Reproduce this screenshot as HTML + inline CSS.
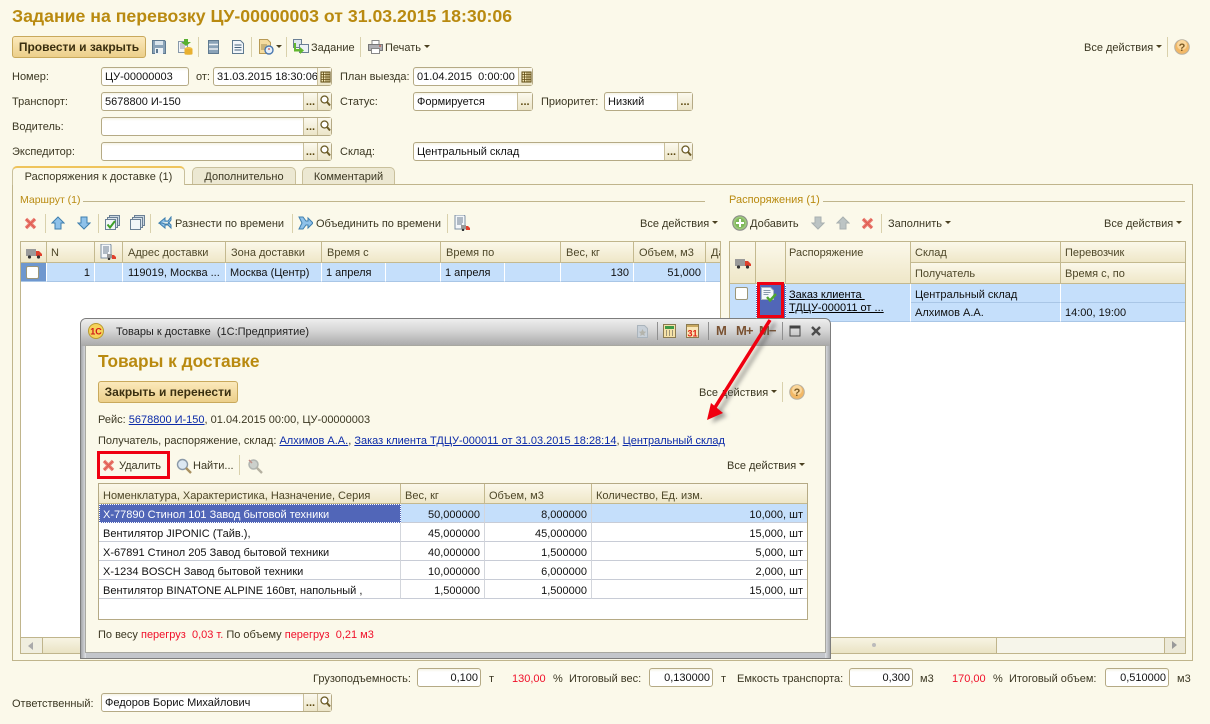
<!DOCTYPE html>
<html><head><meta charset="utf-8"><title>Задание на перевозку</title>
<style>
html,body{margin:0;padding:0}
body{width:1210px;height:724px;overflow:hidden;background:#fbf9ea;position:relative;font:11px/16px "Liberation Sans","Noto Sans CJK SC",sans-serif;color:#3b3722}
.t{position:absolute;white-space:nowrap;margin-top:1px}
.a{position:absolute}
.f{position:absolute;height:17px;border:1px solid #b5aa85;border-radius:3px;background:linear-gradient(#f5f3e6,#fff 3px);box-sizing:content-box;color:#111;line-height:14px}
.f .v{position:absolute;left:3px;top:2px;white-space:nowrap}
.f .n{position:absolute;right:2px;top:2px;white-space:nowrap}
.b{position:absolute;top:0;width:14px;height:17px;border-left:1px solid #c9bf9b;background:linear-gradient(#fbf9ee,#ece5c8);font-style:normal;text-align:center;color:#5d4a10;font-weight:bold;font-size:11px;line-height:19px;box-sizing:border-box}
.b svg{position:absolute;left:1px;top:1px}
.s{position:absolute;width:1px;background:#d9d1ac}
.dd{position:absolute;width:0;height:0;border:3px solid transparent;border-top:3px solid #4a4020;border-bottom:0}
.btn{position:absolute;border:1px solid #c9a95c;border-radius:3px;background:linear-gradient(#fbe9bb,#eccf8a);font-weight:bold;text-align:center;color:#3a2f10;font-size:12px;box-sizing:border-box}
.tab{position:absolute;top:167px;height:17px;box-sizing:border-box;border:1px solid #c9c09c;border-bottom:0;border-radius:5px 5px 0 0;background:#ece8d2;text-align:center;line-height:18px;color:#3b3722}
.h{position:absolute;box-sizing:border-box;background:linear-gradient(#fbf8ea,#efe7c8);border-right:1px solid #c4b98f;border-bottom:1px solid #c4b98f;padding:3px 0 0 5px;color:#4e4728;white-space:nowrap;overflow:hidden}
.rt .h{padding-left:4px}
.pt .h{padding:4px 0 0 4px}
.c{position:absolute;box-sizing:border-box;background:#c5dffb;border-right:1px solid #fff;border-bottom:1px solid #a9c6e6;color:#111;padding:2px 4px;white-space:nowrap;overflow:hidden}
.r{text-align:right}
.p{position:absolute;box-sizing:border-box;background:#fff;border-right:1px solid #d3d6dc;border-bottom:1px solid #c8ccd6;color:#111;white-space:nowrap;overflow:hidden;padding:3px 4px;height:19px}
.lnk{color:#0b2aa8;text-decoration:underline}
.red{color:#f0102a}
.ck{position:absolute;width:11px;height:11px;background:#fff;border:1px solid #9c9678;border-radius:2px}
.ttl{font-weight:bold;color:#b98a10}
.m{position:absolute;font:bold 13px/14px "Liberation Sans",sans-serif;color:#7a5232;white-space:nowrap;letter-spacing:-1px}
</style></head><body>
<svg width="0" height="0" style="position:absolute">
<defs>
<symbol id="q" viewBox="0 0 13 15"><circle cx="5.500" cy="5.500" r="3.500" fill="#fff" stroke="#6a5a25" stroke-width="1.300"/><path d="M8 8L11 11.500" stroke="#6a5a25" stroke-width="2"/></symbol>
<symbol id="cal" viewBox="0 0 13 15"><path d="M2 3h9v10H2z" fill="#f4e7b8" stroke="#5d4a10"/><path d="M2 5.500h9M2 8h9M2 10.500h9M4.500 3v10M7 3v10M9 3v10" stroke="#5d4a10" stroke-width=".8"/></symbol>
<symbol id="x" viewBox="0 0 13 13"><path d="M2 2L11 11M11 2L2 11" stroke="#ea8076" stroke-width="3.400"/><path d="M2 2L11 11M11 2L2 11" stroke="#e05a4e" stroke-width="1.200"/></symbol>
<symbol id="up" viewBox="0 0 14 14"><path d="M7 1L13 7H10V13H4V7H1Z" fill="#8fc2ea" stroke="#3f7fae"/></symbol>
<symbol id="dn" viewBox="0 0 14 14"><path d="M7 13L13 7H10V1H4V7H1Z" fill="#8fc2ea" stroke="#3f7fae"/></symbol>
<symbol id="truck" viewBox="0 0 16 12"><path d="M0 2h10v7H0z" fill="#9a9a9a"/><path d="M10 4h3l3 3v2h-6z" fill="#e0402c"/><circle cx="3.500" cy="10" r="1.600" fill="#333"/><circle cx="12.500" cy="10" r="1.600" fill="#333"/></symbol>
<symbol id="doct" viewBox="0 0 16 16"><path d="M1 0h9l1 1v13H1z" fill="#f4f7fa" stroke="#7d8fa2"/><path d="M3 3h6M3 5h6M3 7h6M3 9h5" stroke="#6b7d90"/><path d="M7 10h5v4H7z" fill="#999"/><path d="M12 11h2l2 2v2h-4z" fill="#e0402c"/><circle cx="9" cy="15" r="1.200" fill="#333"/></symbol>
<symbol id="help" viewBox="0 0 16 16"><circle cx="8" cy="8" r="7.300" fill="#f2b866" stroke="#b8b0a0"/><circle cx="8" cy="6" r="5" fill="#fad79c"/><text x="8" y="12" font-size="11" font-weight="bold" text-anchor="middle" fill="#7a5a25" font-family="Liberation Sans">?</text></symbol>
<symbol id="mg" viewBox="0 0 16 16"><circle cx="6.500" cy="6.500" r="5" fill="#dce8f2" stroke="#8a99a8" stroke-width="1.400"/><path d="M10 10L15 15" stroke="#a89060" stroke-width="2.400"/></symbol>
</defs></svg>

<div class="t ttl" style="left:12px;top:5px;font-size:17.7px;line-height:20px">Задание на перевозку ЦУ-00000003 от 31.03.2015 18:30:06</div>

<!-- main toolbar -->
<div class="btn" style="left:12px;top:36px;width:134px;height:22px;line-height:20px">Провести и закрыть</div>
<svg class="a" style="left:152px;top:40px" width="14" height="14"><path d="M.5.5h12l1 1v12H.5z" fill="#8aa3b8" stroke="#5f7a90"/><path d="M3 1h8v4H3z" fill="#dbe5ec"/><path d="M3 8h8v6H3z" fill="#eef2f4"/><path d="M4 9h2v4H4z" fill="#5f7a90"/></svg>
<svg class="a" style="left:178px;top:38px" width="15" height="18"><path d="M.5 3.500h9v11h-9z" fill="#f2f5f8" stroke="#8899aa"/><path d="M2 6h6M2 8h5M2 10h5" stroke="#99a"/><path d="M6 1h4v3h3l-5 4-5-4h3z" fill="#58b030"/><ellipse cx="10.500" cy="11" rx="4" ry="2" fill="#f0c040"/><path d="M6.500 11v5c0 1 8 1 8 0v-5" fill="#e8b030"/></svg>
<div class="s" style="left:198px;top:37px;height:20px"></div>
<svg class="a" style="left:208px;top:40px" width="11" height="14"><path d="M.5.5h10v13H.5z" fill="#8aa3b8" stroke="#5f7a90"/><path d="M1 4.500h9M1 9h9" stroke="#eaf0f4" stroke-width="1.400"/></svg>
<svg class="a" style="left:232px;top:40px" width="12" height="14"><path d="M.5.5h8l3 3v10H.5z" fill="#f2f6fa" stroke="#5f7a90"/><path d="M2.500 5h7M2.500 7.500h7M2.500 10h7" stroke="#46627c"/></svg>
<div class="s" style="left:251px;top:37px;height:20px"></div>
<svg class="a" style="left:259px;top:39px" width="15" height="16"><path d="M.5.5h8l3 3v11H.5z" fill="#f5dca0" stroke="#b89a55"/><path d="M2 6h6M2 8h5M2 10h4" stroke="#a08a50"/><circle cx="10" cy="11" r="4" fill="#e8f0f8" stroke="#4a78b0" stroke-width="1.400"/><path d="M10 9v2" stroke="#c03030"/></svg>
<div class="dd" style="left:276px;top:45px"></div>
<div class="s" style="left:286px;top:37px;height:20px"></div>
<svg class="a" style="left:293px;top:39px" width="16" height="15"><path d="M.5.5h8v8h-8z" fill="#dfe7ee" stroke="#6b8095"/><path d="M6.500 5.500h9v8h-9z" fill="#eef2f6" stroke="#6b8095"/><path d="M3 4v6h4V8l4 3.500L7 15v-2.500H1V4z" fill="#62b82f"/></svg>
<div class="t" style="left:311px;top:39px">Задание</div>
<div class="s" style="left:360px;top:37px;height:20px"></div>
<svg class="a" style="left:368px;top:40px" width="15" height="14"><path d="M4 .5h7v4H4z" fill="#fff" stroke="#888"/><path d="M.5 4.500h14v6H.5z" fill="#b0b0b4" stroke="#777"/><path d="M3.500 8.500h8v5h-8z" fill="#fff" stroke="#888"/><path d="M11 6h2" stroke="#d04030"/></svg>
<div class="t" style="left:385px;top:39px">Печать</div>
<div class="dd" style="left:424px;top:45px"></div>
<div class="t" style="left:1084px;top:39px">Все действия</div>
<div class="dd" style="left:1156px;top:45px"></div>
<div class="s" style="left:1167px;top:37px;height:20px"></div>
<svg class="a" style="left:1174px;top:39px" width="16" height="16"><use href="#help"/></svg>

<!-- header form -->
<div class="t" style="left:12px;top:68px">Номер:</div>
<div class="f" style="left:101px;top:67px;width:86px"><span class="v">ЦУ-00000003</span></div>
<div class="t" style="left:196px;top:68px">от:</div>
<div class="f" style="left:213px;top:67px;width:117px"><span class="v">31.03.2015 18:30:06</span><i class="b" style="right:0"><svg width="13" height="15"><use href="#cal"/></svg></i></div>
<div class="t" style="left:340px;top:68px">План выезда:</div>
<div class="f" style="left:413px;top:67px;width:118px"><span class="v">01.04.2015&nbsp; 0:00:00</span><i class="b" style="right:0"><svg width="13" height="15"><use href="#cal"/></svg></i></div>

<div class="t" style="left:12px;top:93px">Транспорт:</div>
<div class="f" style="left:101px;top:92px;width:229px"><span class="v">5678800 И-150</span><i class="b" style="right:14px">...</i><i class="b" style="right:0"><svg width="13" height="15"><use href="#q"/></svg></i></div>
<div class="t" style="left:340px;top:93px">Статус:</div>
<div class="f" style="left:413px;top:92px;width:118px"><span class="v">Формируется</span><i class="b" style="right:0;width:15px">...</i></div>
<div class="t" style="left:541px;top:93px">Приоритет:</div>
<div class="f" style="left:604px;top:92px;width:87px"><span class="v">Низкий</span><i class="b" style="right:0;width:15px">...</i></div>

<div class="t" style="left:12px;top:118px">Водитель:</div>
<div class="f" style="left:101px;top:117px;width:229px"><i class="b" style="right:14px">...</i><i class="b" style="right:0"><svg width="13" height="15"><use href="#q"/></svg></i></div>

<div class="t" style="left:12px;top:143px">Экспедитор:</div>
<div class="f" style="left:101px;top:142px;width:229px"><i class="b" style="right:14px">...</i><i class="b" style="right:0"><svg width="13" height="15"><use href="#q"/></svg></i></div>
<div class="t" style="left:340px;top:143px">Склад:</div>
<div class="f" style="left:413px;top:142px;width:278px"><span class="v">Центральный склад</span><i class="b" style="right:14px">...</i><i class="b" style="right:0"><svg width="13" height="15"><use href="#q"/></svg></i></div>

<!-- tabs + panel -->
<div class="a" style="left:12px;top:184px;width:1181px;height:477px;border:1px solid #c0b58c;box-sizing:border-box"></div>
<div class="tab" style="left:12px;top:166px;width:173px;height:19px;background:#fbf9ea;border-top:2px solid #efc45c;border-color:#c9c09c;border-top-color:#efc45c">Распоряжения к доставке (1)</div>
<div class="tab" style="left:192px;width:104px">Дополнительно</div>
<div class="tab" style="left:302px;width:93px">Комментарий</div>

<div class="t" style="left:20px;top:191px;color:#b98a10;font-size:10.5px">Маршрут (1)</div>
<div class="a" style="left:83px;top:201px;width:622px;height:1px;background:#c0b58c"></div>
<div class="t" style="left:729px;top:191px;color:#b98a10">Распоряжения (1)</div>
<div class="a" style="left:823px;top:201px;width:362px;height:1px;background:#c0b58c"></div>

<!-- left toolbar -->
<svg class="a" style="left:24px;top:217px" width="13" height="13"><use href="#x"/></svg>
<div class="s" style="left:45px;top:214px;height:19px"></div>
<svg class="a" style="left:51px;top:216px" width="14" height="14"><use href="#up"/></svg>
<svg class="a" style="left:77px;top:216px" width="14" height="14"><use href="#dn"/></svg>
<div class="s" style="left:98px;top:214px;height:19px"></div>
<svg class="a" style="left:105px;top:215px" width="15" height="15"><path d="M4.500.5h10v10h-10z" fill="#c9d6e0" stroke="#6b8095"/><path d="M2.500 2.500h10v10h-10z" fill="#d9e3ea" stroke="#6b8095"/><path d="M.5 4.500h10v10H.5z" fill="#f2f6f8" stroke="#6b8095"/><path d="M2.500 9.500l2.500 3L10 6" fill="none" stroke="#3fa02a" stroke-width="2"/></svg>
<svg class="a" style="left:130px;top:215px" width="15" height="15"><path d="M4.500.5h10v10h-10z" fill="#c9d6e0" stroke="#6b8095"/><path d="M2.500 2.500h10v10h-10z" fill="#d9e3ea" stroke="#6b8095"/><path d="M.5 4.500h10v10H.5z" fill="#f2f6f8" stroke="#6b8095"/></svg>
<div class="s" style="left:150px;top:214px;height:19px"></div>
<svg class="a" style="left:158px;top:216px" width="14" height="14"><path d="M1 7L7 2v3h3l3-4v3l-3 4H7l-3-1zM1 7l6 5v-3h3l3 3v-3l-3-3" fill="#8fc2ea" stroke="#3f7fae"/></svg>
<div class="t" style="left:175px;top:215px">Разнести по времени</div>
<div class="s" style="left:292px;top:214px;height:19px"></div>
<svg class="a" style="left:298px;top:216px" width="15" height="14"><path d="M1 1l4 0 3 4h2V2l5 5-5 5V9H8l-3 4H1l3-6z" fill="#8fc2ea" stroke="#3f7fae"/></svg>
<div class="t" style="left:316px;top:215px">Объединить по времени</div>
<div class="s" style="left:447px;top:214px;height:19px"></div>
<svg class="a" style="left:454px;top:215px" width="16" height="16"><use href="#doct"/></svg>
<div class="t" style="left:640px;top:215px">Все действия</div>
<div class="dd" style="left:712px;top:221px"></div>

<!-- right toolbar -->
<svg class="a" style="left:732px;top:215px" width="16" height="16"><circle cx="8" cy="8" r="7.300" fill="#9dc87c" stroke="#888"/><circle cx="8" cy="8" r="5" fill="#7fb85a"/><path d="M8 4v8M4 8h8" stroke="#fff" stroke-width="2"/></svg>
<div class="t" style="left:750px;top:215px">Добавить</div>
<svg class="a" style="left:811px;top:216px" width="14" height="14"><path d="M7 13L13 7H10V1H4V7H1Z" fill="#bcc4c4" stroke="#a8b0b0"/></svg>
<svg class="a" style="left:836px;top:216px" width="14" height="14"><path d="M7 1L13 7H10V13H4V7H1Z" fill="#bcc4c4" stroke="#a8b0b0"/></svg>
<svg class="a" style="left:861px;top:217px" width="13" height="13"><use href="#x"/></svg>
<div class="s" style="left:881px;top:214px;height:19px"></div>
<div class="t" style="left:888px;top:215px">Заполнить</div>
<div class="dd" style="left:945px;top:221px"></div>
<div class="t" style="left:1104px;top:215px">Все действия</div>
<div class="dd" style="left:1176px;top:221px"></div>

<!-- left table -->
<div class="a" style="left:20px;top:241px;width:701px;height:413px;background:#fff;border:1px solid #c0b58c;box-sizing:border-box;overflow:hidden">
<div class="h" style="left:0;top:0;width:26px;height:21px"><svg class="a" style="left:5px;top:5px" width="16" height="12"><use href="#truck"/></svg></div>
<div class="h" style="left:26px;top:0;width:48px;height:21px;padding-left:4px">N</div>
<div class="h" style="left:74px;top:0;width:28px;height:21px"><svg class="a" style="left:5px;top:2px" width="16" height="16"><use href="#doct"/></svg></div>
<div class="h" style="left:102px;top:0;width:103px;height:21px">Адрес доставки</div>
<div class="h" style="left:205px;top:0;width:96px;height:21px">Зона доставки</div>
<div class="h" style="left:301px;top:0;width:119px;height:21px">Время с</div>
<div class="h" style="left:420px;top:0;width:120px;height:21px">Время по</div>
<div class="h" style="left:540px;top:0;width:73px;height:21px">Вес, кг</div>
<div class="h" style="left:613px;top:0;width:72px;height:21px">Объем, м3</div>
<div class="h" style="left:685px;top:0;width:15px;height:21px">Дата</div>
<div class="c" style="left:0;top:21px;width:26px;height:19px;background:#6e97cf"><span class="ck" style="left:5px;top:3px"></span></div>
<div class="c r" style="left:26px;top:21px;width:48px;height:19px">1</div>
<div class="c" style="left:74px;top:21px;width:28px;height:19px"></div>
<div class="c" style="left:102px;top:21px;width:103px;height:19px;padding-left:5px">119019, Москва ...</div>
<div class="c" style="left:205px;top:21px;width:96px;height:19px">Москва (Центр)</div>
<div class="c" style="left:301px;top:21px;width:64px;height:19px">1 апреля</div>
<div class="c" style="left:365px;top:21px;width:55px;height:19px"></div>
<div class="c" style="left:420px;top:21px;width:64px;height:19px">1 апреля</div>
<div class="c" style="left:484px;top:21px;width:56px;height:19px"></div>
<div class="c r" style="left:540px;top:21px;width:73px;height:19px">130</div>
<div class="c r" style="left:613px;top:21px;width:72px;height:19px">51,000</div>
<div class="c" style="left:685px;top:21px;width:15px;height:19px"></div>
<div class="a" style="left:0;top:395px;width:699px;height:16px;background:linear-gradient(#f7f4e3,#e9e2c2);border-top:1px solid #c0b58c"><div class="a" style="left:0;top:0;width:21px;height:16px;background:#f0eedf;border-right:1px solid #c0b58c"><div class="a" style="left:7px;top:4px;border:4px solid transparent;border-right:5px solid #aaa;border-left:0"></div></div></div>
</div>

<!-- right table -->
<div class="a rt" style="left:729px;top:241px;width:457px;height:413px;background:#fff;border:1px solid #c0b58c;box-sizing:border-box;overflow:hidden">
<div class="h" style="left:0;top:0;width:26px;height:42px"><svg class="a" style="left:5px;top:15px" width="16" height="12"><use href="#truck"/></svg></div>
<div class="h" style="left:26px;top:0;width:30px;height:42px"></div>
<div class="h" style="left:56px;top:0;width:125px;height:42px;padding-left:3px">Распоряжение</div>
<div class="h" style="left:181px;top:0;width:150px;height:21px">Склад</div>
<div class="h" style="left:181px;top:21px;width:150px;height:21px">Получатель</div>
<div class="h" style="left:331px;top:0;width:124px;height:21px;border-right:0">Перевозчик</div>
<div class="h" style="left:331px;top:21px;width:124px;height:21px;border-right:0">Время с, по</div>
<div class="c" style="left:0;top:42px;width:26px;height:38px;border-right:0"><span class="ck" style="left:5px;top:3px"></span></div>
<div class="c" style="left:26px;top:42px;width:30px;height:38px;background:#5166b8;border:1px dotted #fff"></div>
<div class="c" style="left:56px;top:42px;width:125px;height:38px;line-height:13px;padding:5px 3px;color:#000"><u>Заказ клиента&nbsp;</u><br><u>ТДЦУ-000011 от ...</u></div>
<div class="c" style="left:181px;top:42px;width:150px;height:19px;padding-top:3px">Центральный склад</div>
<div class="c" style="left:181px;top:61px;width:150px;height:19px">Алхимов А.А.</div>
<div class="c" style="left:331px;top:42px;width:124px;height:19px;border-right:0"></div>
<div class="c" style="left:331px;top:61px;width:124px;height:19px;border-right:0">14:00, 19:00</div>
<svg class="a" style="left:31px;top:45px" width="16" height="16"><path d="M.5.5h9l3 3v9H.5z" fill="#f4f7fa" stroke="#a8b4c0"/><path d="M2.500 3.500h7M2.500 5.500h7M2.500 7.500h5" stroke="#8899aa"/><path d="M6 10l3 3.500 6-6.500" fill="none" stroke="#4ea82e" stroke-width="2.400"/></svg>
<div class="a" style="left:27px;top:40px;width:27px;height:36px;border:3px solid #ef0012;box-sizing:border-box"></div>
<div class="a" style="left:0;top:395px;width:455px;height:16px;background:linear-gradient(#f7f4e3,#e9e2c2);border-top:1px solid #c0b58c"></div>
<div class="a" style="left:266px;top:396px;width:168px;height:15px;background:#f6f5ea;border-left:1px solid #c0b58c"></div>
<div class="a" style="left:434px;top:396px;width:21px;height:15px;background:#ece9d8;border-left:1px solid #c0b58c"><div class="a" style="left:7px;top:3px;border:4px solid transparent;border-left:5px solid #999;border-right:0"></div></div>
<div class="a" style="left:142px;top:401px;width:4px;height:4px;border-radius:2px;background:#bbb"></div>
</div>

<!-- bottom row -->
<div class="t" style="left:313px;top:670px">Грузоподъемность:</div>
<div class="f" style="left:417px;top:668px;width:62px"><span class="n">0,100</span></div>
<div class="t" style="left:489px;top:670px">т</div>
<div class="t red" style="left:512px;top:670px">130,00</div>
<div class="t" style="left:553px;top:670px">%</div>
<div class="t" style="left:569px;top:670px">Итоговый вес:</div>
<div class="f" style="left:649px;top:668px;width:62px"><span class="n">0,130000</span></div>
<div class="t" style="left:721px;top:670px">т</div>
<div class="t" style="left:737px;top:670px">Емкость транспорта:</div>
<div class="f" style="left:849px;top:668px;width:62px"><span class="n">0,300</span></div>
<div class="t" style="left:920px;top:670px">м3</div>
<div class="t red" style="left:952px;top:670px">170,00</div>
<div class="t" style="left:993px;top:670px">%</div>
<div class="t" style="left:1009px;top:670px">Итоговый объем:</div>
<div class="f" style="left:1105px;top:668px;width:62px"><span class="n">0,510000</span></div>
<div class="t" style="left:1177px;top:670px">м3</div>
<div class="t" style="left:12px;top:695px">Ответственный:</div>
<div class="f" style="left:101px;top:693px;width:229px"><span class="v">Федоров Борис Михайлович</span><i class="b" style="right:14px">...</i><i class="b" style="right:0"><svg width="13" height="15"><use href="#q"/></svg></i></div>

<!-- popup window -->
<div class="a" style="left:80px;top:318px;width:751px;height:341px;border:1px solid #7d7d7d;border-radius:6px 6px 0 0;box-sizing:border-box;background:#c3c6cb">
<div class="a" style="left:0;top:0;width:749px;height:27px;border-radius:5px 5px 0 0;background:linear-gradient(#eeeeee,#d4d4d4 45%,#a8a8a8)"></div>
<div class="a" style="left:0;top:27px;width:5px;height:312px;background:linear-gradient(90deg,#a5a7aa,#dfe2e6)"></div>
<div class="a" style="left:744px;top:27px;width:5px;height:312px;background:linear-gradient(270deg,#a5a7aa,#dfe2e6)"></div>
</div>
<div class="a" style="left:85px;top:345px;width:741px;height:308px;background:#fbf9ea;border:1px solid #a8a8a0;box-sizing:border-box"></div>
<svg class="a" style="left:88px;top:323px" width="16" height="16"><circle cx="8" cy="8" r="7.500" fill="#f6d25a" stroke="#b89a30"/><text x="8" y="11.500" font-size="9" font-weight="bold" text-anchor="middle" fill="#d01818" font-family="Liberation Sans">1С</text></svg>
<div class="t" style="left:116px;top:323px;color:#222">Товары к доставке&nbsp; (1С:Предприятие)</div>
<svg class="a" style="left:637px;top:325px" width="11" height="13"><path d="M.5.5h7l3 3v9H.5z" fill="#c8d0d8" stroke="#aab4bc"/><path d="M5.500 4l1.200 2.500 2.500.3-1.900 1.700.5 2.500-2.300-1.300-2.300 1.300.5-2.500L1.800 6.800l2.500-.3z" fill="#b4b4ac"/></svg>
<div class="s" style="left:657px;top:322px;height:18px;background:#909090"></div>
<svg class="a" style="left:663px;top:324px" width="13" height="14"><path d="M.5.5h12v13H.5z" fill="#f5e2a8" stroke="#8a7a50"/><path d="M2 2h9v3H2z" fill="#3f9a46"/><path d="M3 7h1M6 7h1M9 7h1M3 9h1M6 9h1M9 9h1M3 11h1M6 11h1M9 11h1" stroke="#444"/></svg>
<svg class="a" style="left:686px;top:324px" width="13" height="14"><path d="M.5.5h12v13H.5z" fill="#f8e6b8" stroke="#8a7a50"/><path d="M1 1h11v2H1z" fill="#c8a860"/><text x="6.500" y="12.500" font-size="9" font-weight="bold" text-anchor="middle" fill="#e02010" font-family="Liberation Sans">31</text></svg>
<div class="s" style="left:708px;top:322px;height:18px;background:#909090"></div>
<div class="m" style="left:716px;top:324px">M</div>
<div class="m" style="left:736px;top:324px">M+</div>
<div class="m" style="left:759px;top:324px">M−</div>
<div class="s" style="left:782px;top:322px;height:18px;background:#909090"></div>
<svg class="a" style="left:789px;top:325px" width="12" height="12"><path d="M1 1h10v10H1z" fill="none" stroke="#444"/><path d="M1 2.500h10" stroke="#444" stroke-width="2"/></svg>
<svg class="a" style="left:811px;top:326px" width="10" height="10"><path d="M1 1L9 9M9 1L1 9" stroke="#4c4c4c" stroke-width="2.400"/></svg>

<div class="t ttl" style="left:98px;top:350px;font-size:17.300px;line-height:20px">Товары к доставке</div>
<div class="btn" style="left:98px;top:381px;width:140px;height:22px;line-height:20px">Закрыть и перенести</div>
<div class="t" style="left:699px;top:384px">Все действия</div>
<div class="dd" style="left:771px;top:390px"></div>
<div class="s" style="left:782px;top:382px;height:20px"></div>
<svg class="a" style="left:789px;top:384px" width="16" height="16"><use href="#help"/></svg>
<div class="t" style="left:98px;top:411px">Рейс: <span class="lnk">5678800 И-150</span>, 01.04.2015 00:00, ЦУ-00000003</div>
<div class="t" style="left:98px;top:432px">Получатель, распоряжение, склад: <span class="lnk">Алхимов А.А.</span>, <span class="lnk">Заказ клиента ТДЦУ-000011 от 31.03.2015 18:28:14</span>, <span class="lnk">Центральный склад</span></div>

<svg class="a" style="left:102px;top:459px" width="13" height="13"><use href="#x"/></svg>
<div class="t" style="left:119px;top:457px">Удалить</div>
<div class="a" style="left:97px;top:451px;width:73px;height:28px;border:3px solid #ef0012;box-sizing:border-box"></div>
<svg class="a" style="left:176px;top:458px" width="16" height="16"><use href="#mg"/></svg>
<div class="t" style="left:193px;top:457px">Найти...</div>
<div class="s" style="left:239px;top:455px;height:20px"></div>
<svg class="a" style="left:247px;top:458px" width="16" height="16"><circle cx="6.500" cy="6.500" r="4.500" fill="#ccd0cc" stroke="#b0b4b0" stroke-width="1.500"/><path d="M10 10L15 15" stroke="#b4b0a0" stroke-width="2.400"/><path d="M2 2l3 3" stroke="#c09088" stroke-width="1.500"/></svg>
<div class="t" style="left:727px;top:457px">Все действия</div>
<div class="dd" style="left:799px;top:463px"></div>

<!-- popup table -->
<div class="a pt" style="left:98px;top:483px;width:710px;height:137px;background:#fff;border:1px solid #b5aa85;box-sizing:border-box;overflow:hidden">
<div class="h" style="left:0;top:0;width:302px;height:20px">Номенклатура, Характеристика, Назначение, Серия</div>
<div class="h" style="left:302px;top:0;width:84px;height:20px">Вес, кг</div>
<div class="h" style="left:386px;top:0;width:107px;height:20px">Объем, м3</div>
<div class="h" style="left:493px;top:0;width:215px;height:20px;border-right:0">Количество, Ед. изм.</div>

<div class="p" style="left:0;top:20px;width:302px;background:#5166b8;color:#fff;border:1px dotted #fff;padding:2px 3px">X-77890 Стинол 101 Завод бытовой техники</div>
<div class="p r" style="left:302px;top:20px;width:84px;background:#c5dffb">50,000000</div>
<div class="p r" style="left:386px;top:20px;width:107px;background:#c5dffb">8,000000</div>
<div class="p r" style="left:493px;top:20px;width:215px;background:#c5dffb;border-right:0">10,000, шт</div>

<div class="p" style="left:0;top:39px;width:302px">Вентилятор JIPONIC (Тайв.),</div>
<div class="p r" style="left:302px;top:39px;width:84px">45,000000</div>
<div class="p r" style="left:386px;top:39px;width:107px">45,000000</div>
<div class="p r" style="left:493px;top:39px;width:215px;border-right:0">15,000, шт</div>

<div class="p" style="left:0;top:58px;width:302px">X-67891 Стинол 205 Завод бытовой техники</div>
<div class="p r" style="left:302px;top:58px;width:84px">40,000000</div>
<div class="p r" style="left:386px;top:58px;width:107px">1,500000</div>
<div class="p r" style="left:493px;top:58px;width:215px;border-right:0">5,000, шт</div>

<div class="p" style="left:0;top:77px;width:302px">X-1234 BOSCH Завод бытовой техники</div>
<div class="p r" style="left:302px;top:77px;width:84px">10,000000</div>
<div class="p r" style="left:386px;top:77px;width:107px">6,000000</div>
<div class="p r" style="left:493px;top:77px;width:215px;border-right:0">2,000, шт</div>

<div class="p" style="left:0;top:96px;width:302px">Вентилятор BINATONE ALPINE 160вт, напольный ,</div>
<div class="p r" style="left:302px;top:96px;width:84px">1,500000</div>
<div class="p r" style="left:386px;top:96px;width:107px">1,500000</div>
<div class="p r" style="left:493px;top:96px;width:215px;border-right:0">15,000, шт</div>
</div>
<div class="t" style="left:98px;top:626px">По весу <span class="red">перегруз&nbsp; 0,03 т.</span> По объему <span class="red">перегруз&nbsp; 0,21 м3</span></div>

<!-- red arrow -->
<svg class="a" style="left:0;top:0;pointer-events:none" width="1210" height="724">
<defs><filter id="bl" x="-50%" y="-50%" width="200%" height="200%"><feGaussianBlur stdDeviation="2"/></filter></defs>
<g filter="url(#bl)" opacity=".55" transform="translate(5,3)"><path d="M770 320L714 409" stroke="#555" stroke-width="3.500"/><path d="M707 420L722 413L712 404Z" fill="#555"/></g>
<path d="M770 320L714 409" stroke="#f00010" stroke-width="3.500"/>
<path d="M707 420L723 413L711 403Z" fill="#f00010"/>
</svg>
</body></html>
